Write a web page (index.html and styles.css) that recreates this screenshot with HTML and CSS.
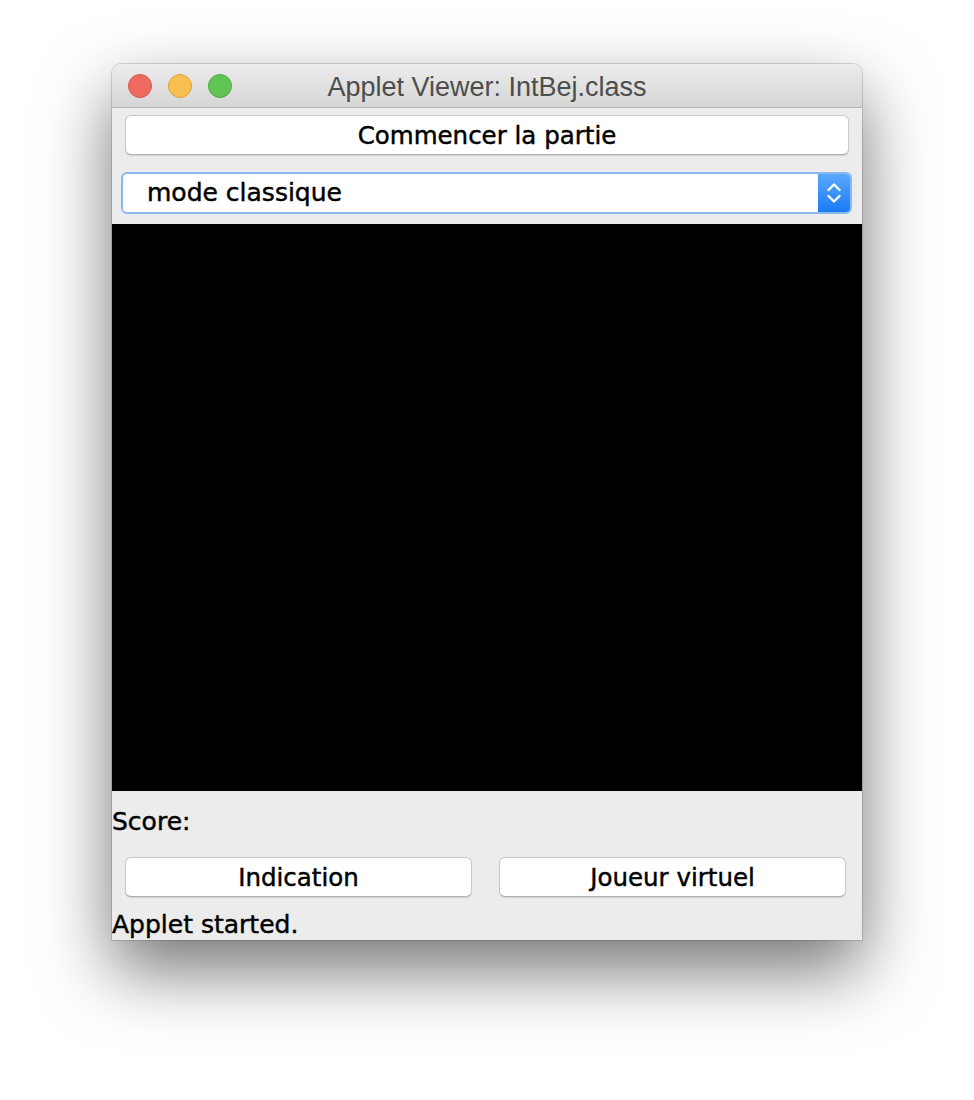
FILE: index.html
```html
<!DOCTYPE html>
<html>
<head>
<meta charset="utf-8">
<link rel="stylesheet" href="styles.css">
</head>
<body>
<div class="stage">
  <div class="window">
    <div class="titlebar">
      <div class="lights">
        <span class="light red"></span>
        <span class="light yellow"></span>
        <span class="light green"></span>
      </div>
      <div class="title">Applet Viewer: IntBej.class</div>
    </div>
    <div class="content">
      <div class="row-top">
        <button class="btn btn-wide">Commencer la partie</button>
      </div>
      <div class="row-select">
        <div class="select">
          <span class="select-text">mode classique</span>
          <span class="select-arrows">
            <svg width="18" height="30" viewBox="0 0 18 30">
              <path d="M3.5 12 L9 6.5 L14.5 12" fill="none" stroke="#fff" stroke-width="2.4" stroke-linecap="round" stroke-linejoin="round"/>
              <path d="M3.5 18 L9 23.5 L14.5 18" fill="none" stroke="#fff" stroke-width="2.4" stroke-linecap="round" stroke-linejoin="round"/>
            </svg>
          </span>
        </div>
      </div>
      <div class="canvas"></div>
      <div class="score">Score:</div>
      <div class="row-bottom">
        <button class="btn">Indication</button>
        <button class="btn">Joueur virtuel</button>
      </div>
      <div class="status">Applet started.</div>
    </div>
  </div>
</div>
</body>
</html>
```

FILE: styles.css
```css
html, body {
  margin: 0;
  padding: 0;
  background: #ffffff;
}

.stage {
  padding: 64px 0 0 112px;
  height: 1100px;
  box-sizing: border-box;
  overflow: hidden;
}

.window {
  width: 750px;
  height: 876px;
  border-radius: 9px 9px 0 0;
  background: #ececec;
  box-shadow: 0 0 0 1px rgba(0,0,0,0.14), 0 30px 70px rgba(0,0,0,0.55);
  display: flex;
  flex-direction: column;
  overflow: hidden;
}

.titlebar {
  height: 43px;
  flex: none;
  background: linear-gradient(#ececec, #d6d6d6);
  border-bottom: 1px solid #b4b4b4;
  position: relative;
  display: flex;
  align-items: center;
  justify-content: center;
}

.lights {
  position: absolute;
  left: 16px;
  top: 10px;
  display: flex;
  gap: 16px;
}

.light {
  width: 24px;
  height: 24px;
  border-radius: 50%;
  box-sizing: border-box;
}
.red { background: #ee6a5f; border: 1px solid #d8554b; }
.yellow { background: #f6bf4f; border: 1px solid #dea33b; }
.green { background: #61c554; border: 1px solid #4ea942; }

.title {
  font-family: "Liberation Sans", Arial, sans-serif;
  font-size: 27px;
  color: #4d4d4d;
  margin-top: 4px;
}

.content {
  flex: 1;
  display: flex;
  flex-direction: column;
  font-family: "DejaVu Sans", sans-serif;
  color: #000;
  -webkit-text-stroke: 0.45px #000;
}

.row-top {
  padding: 7px 13px 0 13px;
}

.btn {
  font-family: "DejaVu Sans", sans-serif;
  font-size: 24.5px;
  color: #000;
  -webkit-text-stroke: 0.45px #000;
  background: #fff;
  border: 1px solid #c8c8c8;
  border-bottom-color: #b0b0b0;
  border-radius: 6px;
  height: 40px;
  padding: 0;
  box-shadow: 0 1px 1px rgba(0,0,0,0.12);
}

.btn-wide {
  width: 100%;
}

.row-select {
  padding: 17px 10px 0 9px;
}

.select {
  height: 42px;
  box-sizing: border-box;
  border: 2px solid #8ab9ed;
  border-radius: 6px;
  background: #fff;
  display: flex;
  align-items: center;
  overflow: hidden;
}

.select-text {
  flex: 1;
  font-size: 25px;
  padding-left: 24px;
  padding-bottom: 1px;
}

.select-arrows {
  width: 32px;
  height: 100%;
  background: linear-gradient(#5aa8fb, #1a7cf7);
  display: flex;
  align-items: center;
  justify-content: center;
}

.canvas {
  margin-top: 10px;
  height: 567px;
  background: #000;
}

.score {
  font-size: 25px;
  line-height: 30px;
  margin-top: 16px;
}

.row-bottom {
  display: grid;
  grid-template-columns: 1fr 1fr;
  column-gap: 27px;
  padding: 20px 16px 0 13px;
}

.status {
  font-size: 25px;
  margin-top: 13px;
  line-height: 30px;
}
```
